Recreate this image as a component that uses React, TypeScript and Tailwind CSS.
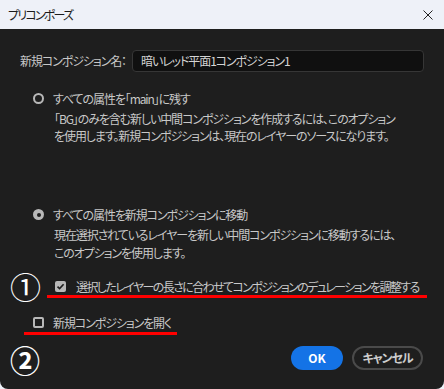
import React from "react";

const jp = "font-['Noto_Sans_CJK_JP','Noto_Sans',sans-serif] [font-feature-settings:'palt'] whitespace-nowrap";

function Radio({ checked }: { checked?: boolean }) {
  return checked ? (
    <span className="w-[11px] h-[11px] rounded-full bg-[#b8b8b8] flex items-center justify-center shrink-0">
      <span className="w-[4px] h-[4px] rounded-full bg-[#1e1e1e]" />
    </span>
  ) : (
    <span className="w-[11px] h-[11px] rounded-full border-[2.5px] border-[#b8b8b8] shrink-0" />
  );
}

function Check({ checked }: { checked?: boolean }) {
  return checked ? (
    <span className="w-[11px] h-[11px] rounded-[2px] bg-[#b8b8b8] flex items-center justify-center shrink-0">
      <svg width="9" height="9" viewBox="0 0 9 9">
        <path d="M1.5 4.6 L3.6 6.6 L7.6 2.2" fill="none" stroke="#1e1e1e" strokeWidth="1.6" />
      </svg>
    </span>
  ) : (
    <span className="w-[11px] h-[11px] rounded-[2px] border-2 border-[#b8b8b8] shrink-0" />
  );
}

export default function App() {
  return (
    <div className={`w-[444px] h-[389px] bg-[#eef1f8] flex flex-col text-[12px] tracking-[-1.1px] ${jp}`}>
      {/* title bar */}
      <div className="h-[29px] shrink-0 flex items-center justify-between pl-[8px] pr-[11px] text-[#1b1b1b]">
        <span className="leading-none tracking-[-1.8px]">プリコンポーズ</span>
        <svg width="10" height="10" viewBox="0 0 10 10">
          <path d="M0.5 0.5 L9.5 9.5 M9.5 0.5 L0.5 9.5" stroke="#222" strokeWidth="1" />
        </svg>
      </div>

      <div className="relative flex-1 bg-[#1e1e1e] rounded-b-[8px] pl-[20px] pr-[20px] text-[#c8c8c8]">
        {/* name row */}
        <div className="mt-[21px] h-[22px] flex items-center">
          <span className="w-[112px] leading-none">新規コンポジション名：</span>
          <div className="flex-1 h-[22px] bg-[#101010] border border-[#363636] rounded-[4px] flex items-center pl-[8px] text-[#d4d4d4]">
            暗いレッド平面1コンポジション1
          </div>
        </div>

        {/* option 1 */}
        <div className="mt-[18px] ml-[13px] h-[17px] flex items-center gap-[9px]">
          <Radio />
          <span>すべての属性を「main」に残す</span>
        </div>
        <div className="mt-[3px] ml-[34px] leading-[17px]">
          <div>「BG」のみを含む新しい中間コンポジションを作成するには、このオプション</div>
          <div>を使用します。新規コンポジションは、現在のレイヤーのソースになります。</div>
        </div>

        {/* option 2 */}
        <div className="mt-[62px] ml-[13px] h-[17px] flex items-center gap-[9px]">
          <Radio checked />
          <span>すべての属性を新規コンポジションに移動</span>
        </div>
        <div className="mt-[3px] ml-[34px] leading-[18px]">
          <div>現在選択されているレイヤーを新しい中間コンポジションに移動するには、</div>
          <div>このオプションを使用します。</div>
        </div>

        {/* checkboxes */}
        <div className="mt-[16px] ml-[35px] h-[17px] flex items-center gap-[10px]">
          <Check checked />
          <span className="tracking-[-1.6px]">選択したレイヤーの長さに合わせてコンポジションのデュレーションを調整する</span>
        </div>
        <div className="mt-[19px] ml-[13px] h-[17px] flex items-center gap-[9px]">
          <Check />
          <span>新規コンポジションを開く</span>
        </div>

        {/* buttons */}
        <div className="mt-[15px] flex justify-end gap-[9px] pr-[1px]">
          <button className="w-[52px] h-[24px] rounded-full bg-[#1473e6] text-white font-bold leading-none tracking-normal">OK</button>
          <button className="w-[71px] h-[24px] rounded-full border-2 border-[#4a4a4a] text-[#cccccc] font-bold leading-none">キャンセル</button>
        </div>

        {/* annotations */}
        <span className="absolute left-[10px] top-[241px] text-[31px] leading-none text-white tracking-normal">①</span>
        <span className="absolute left-[47px] top-[266px] w-[380px] h-[3px] bg-[#ff0000]" />
        <span className="absolute left-[24px] top-[303px] w-[153px] h-[3px] bg-[#ff0000]" />
        <span className="absolute left-[10px] top-[315px] text-[30px] font-bold leading-none text-white tracking-normal">②</span>
      </div>
    </div>
  );
}
